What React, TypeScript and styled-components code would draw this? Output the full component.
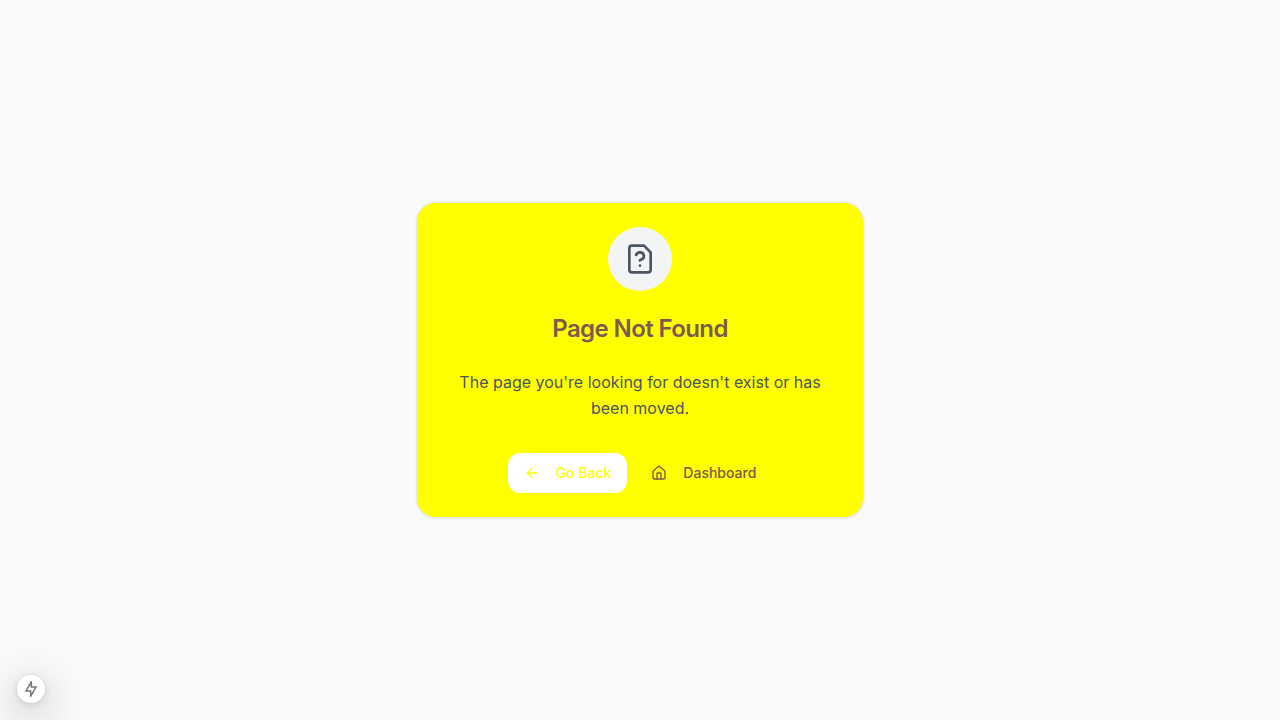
import React from 'react';
import styled, { createGlobalStyle, css } from 'styled-components';

const GlobalStyle = createGlobalStyle`
  *, *::before, *::after { box-sizing: border-box; }
  body {
    margin: 0;
    background: #f8fafc;
    font-family: Inter, "Liberation Sans", sans-serif;
  }
`;

const Page = styled.main`
  min-height: 100vh;
  display: flex;
  align-items: center;
  justify-content: center;
  padding: 16px;
`;

const Card = styled.section`
  width: 100%;
  max-width: 448px;
  padding: 24px;
  border: 1px solid #e5e7eb;
  border-radius: 20px;
  background: #ffff00;
  box-shadow: 0 1px 3px rgba(0, 0, 0, 0.06);
  display: flex;
  flex-direction: column;
  align-items: center;
  text-align: center;
`;

const IconCircle = styled.div`
  display: flex;
  align-items: center;
  justify-content: center;
  width: 64px;
  height: 64px;
  border-radius: 50%;
  background: #f3f4f6;
  color: #4b5563;
`;

const Title = styled.h1`
  margin: 24px 0 0;
  font-size: 24px;
  line-height: 28px;
  font-weight: 600;
  letter-spacing: -0.025em;
  color: #7d5a50;
`;

const Message = styled.p`
  margin: 26px 0 0;
  padding: 0 16px;
  font-size: 16px;
  line-height: 26px;
  color: #4b5563;
`;

const Actions = styled.div`
  display: flex;
  justify-content: center;
  gap: 8px;
  margin-top: 32px;
`;

const Button = styled.button<{ $variant: 'solid' | 'ghost' }>`
  display: inline-flex;
  align-items: center;
  gap: 16px;
  height: 40px;
  padding: 0 16px;
  border: 0;
  border-radius: 12px;
  font-family: inherit;
  font-size: 14px;
  line-height: 20px;
  font-weight: 500;
  cursor: pointer;
  ${({ $variant }) =>
    $variant === 'solid'
      ? css`background: #ffffff; color: #ffff00;`
      : css`background: transparent; color: #7d5a50;`}
`;

const QuickButton = styled.button`
  position: fixed;
  left: 17px;
  bottom: 17px;
  display: flex;
  align-items: center;
  justify-content: center;
  width: 28px;
  height: 28px;
  padding: 0;
  border: 0;
  border-radius: 50%;
  background: #ffffff;
  color: #777777;
  cursor: pointer;
  box-shadow: 0 0 0 1px rgba(0, 0, 0, 0.04), 0 2px 8px rgba(0, 0, 0, 0.12), 0 11px 40px 5px rgba(0, 0, 0, 0.2);
`;

type IconProps = { size: number; children: React.ReactNode };

const Icon = ({ size, children }: IconProps) => (
  <svg
    width={size}
    height={size}
    viewBox="0 0 24 24"
    fill="none"
    stroke="currentColor"
    strokeWidth="2"
    strokeLinecap="round"
    strokeLinejoin="round"
    aria-hidden="true"
  >
    {children}
  </svg>
);

export default function App() {
  return (
    <>
      <GlobalStyle />
      <Page>
        <Card>
          <IconCircle>
            <Icon size={32}>
              <path d="M12 17h.01" />
              <path d="M15 2H6a2 2 0 0 0-2 2v16a2 2 0 0 0 2 2h12a2 2 0 0 0 2-2V7z" />
              <path d="M9.1 9a3 3 0 0 1 5.82 1c0 2-3 3-3 3" />
            </Icon>
          </IconCircle>
          <Title>Page Not Found</Title>
          <Message>The page you're looking for doesn't exist or has been moved.</Message>
          <Actions>
            <Button type="button" $variant="solid">
              <Icon size={16}>
                <path d="m12 19-7-7 7-7" />
                <path d="M19 12H5" />
              </Icon>
              Go Back
            </Button>
            <Button type="button" $variant="ghost">
              <Icon size={16}>
                <path d="M15 21v-8a1 1 0 0 0-1-1h-4a1 1 0 0 0-1 1v8" />
                <path d="M3 10a2 2 0 0 1 .709-1.528l7-5.999a2 2 0 0 1 2.582 0l7 5.999A2 2 0 0 1 21 10v9a2 2 0 0 1-2 2H5a2 2 0 0 1-2-2z" />
              </Icon>
              Dashboard
            </Button>
          </Actions>
        </Card>
      </Page>
      <QuickButton type="button" aria-label="Quick actions">
        <svg width="16" height="16" viewBox="0 0 16 16" fill="none" stroke="currentColor" strokeWidth="1.5" aria-hidden="true">
          <path d="M8.3 0.8V6.1H13L7.7 15.2V9.9H3z" />
        </svg>
      </QuickButton>
    </>
  );
}
